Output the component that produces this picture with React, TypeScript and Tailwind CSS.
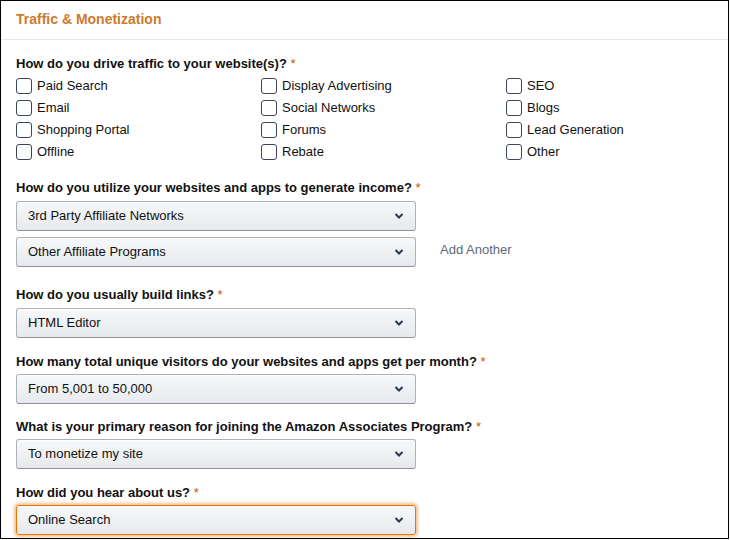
const font = { fontFamily: '"Liberation Sans", Arial, sans-serif' };

const traffic = [
  ['Paid Search', 'Display Advertising', 'SEO'],
  ['Email', 'Social Networks', 'Blogs'],
  ['Shopping Portal', 'Forums', 'Lead Generation'],
  ['Offline', 'Rebate', 'Other'],
];

function Label({ children }: { children: React.ReactNode }) {
  return (
    <div className="text-[13px] font-bold leading-[20px] text-[#111]">
      {children} <span className="text-[#c45500] font-normal">*</span>
    </div>
  );
}

function Chevron() {
  return (
    <svg width="10" height="7" viewBox="0 0 10 7" className="absolute right-[11px] top-1/2 -translate-y-1/2">
      <path d="M1.5 1.5 L5 5 L8.5 1.5" fill="none" stroke="#2b3a52" strokeWidth="2" />
    </svg>
  );
}

function Select({ value, focused }: { value: string; focused?: boolean }) {
  return (
    <div
      className={`relative w-[400px] h-[30px] rounded-[3px] border bg-gradient-to-b from-[#f7f8fa] to-[#e7e9ec] flex items-center pl-[11px] text-[13px] text-[#111] ${
        focused
          ? 'border-[#e77600] shadow-[0_0_3px_2px_rgba(228,121,17,0.45)]'
          : 'border-[#adb1b8] border-b-[#8d9096] shadow-[0_1px_0_rgba(255,255,255,0.6)_inset]'
      }`}
    >
      {value}
      <Chevron />
    </div>
  );
}

function Checkbox({ label }: { label: string }) {
  return (
    <label className="flex items-center gap-[5px] h-[22px]">
      <span className="w-[16px] h-[16px] rounded-[3px] border border-[#3b4656] bg-white" />
      <span className="text-[13px] text-[#111]">{label}</span>
    </label>
  );
}

export default function App() {
  return (
    <div style={font} className="w-[730px] h-[540px] bg-white overflow-hidden">
      <div className="w-[729px] h-[539px] border border-black flex flex-col overflow-hidden">
        {/* Header */}
        <div className="shrink-0 h-[39px] border-b border-[#e7e9ec] px-[15px] flex items-center">
          <h2 className="text-[14px] font-bold text-[#cd7b2c] -mt-[2px]">Traffic &amp; Monetization</h2>
        </div>

        <div className="px-[15px] pt-[14px]">
          {/* Traffic sources */}
          <div className="mb-[15px]">
            <Label>How do you drive traffic to your website(s)?</Label>
            <div className="mt-px grid grid-cols-[245px_245px_1fr]">
              {traffic.flat().map(t => (
                <Checkbox key={t} label={t} />
              ))}
            </div>
          </div>

          {/* Income */}
          <div className="mb-[18px]">
            <Label>How do you utilize your websites and apps to generate income?</Label>
            <div className="mt-[3px] flex flex-col gap-[6px]">
              <Select value="3rd Party Affiliate Networks" />
              <div className="flex items-center gap-[24px]">
                <Select value="Other Affiliate Programs" />
                <span className="text-[13px] text-[#5b6b7c] -mt-[4px]">Add Another</span>
              </div>
            </div>
          </div>

          <div className="mb-[14px]">
            <Label>How do you usually build links?</Label>
            <div className="mt-[3px]">
              <Select value="HTML Editor" />
            </div>
          </div>

          <div className="mb-[13px]">
            <Label>How many total unique visitors do your websites and apps get per month?</Label>
            <div className="mt-[2px]">
              <Select value="From 5,001 to 50,000" />
            </div>
          </div>

          <div className="mb-[14px]">
            <Label>What is your primary reason for joining the Amazon Associates Program?</Label>
            <div className="mt-[2px]">
              <Select value="To monetize my site" />
            </div>
          </div>

          <div>
            <Label>How did you hear about us?</Label>
            <div className="mt-[2px]">
              <Select value="Online Search" focused />
            </div>
          </div>
        </div>
      </div>
    </div>
  );
}
